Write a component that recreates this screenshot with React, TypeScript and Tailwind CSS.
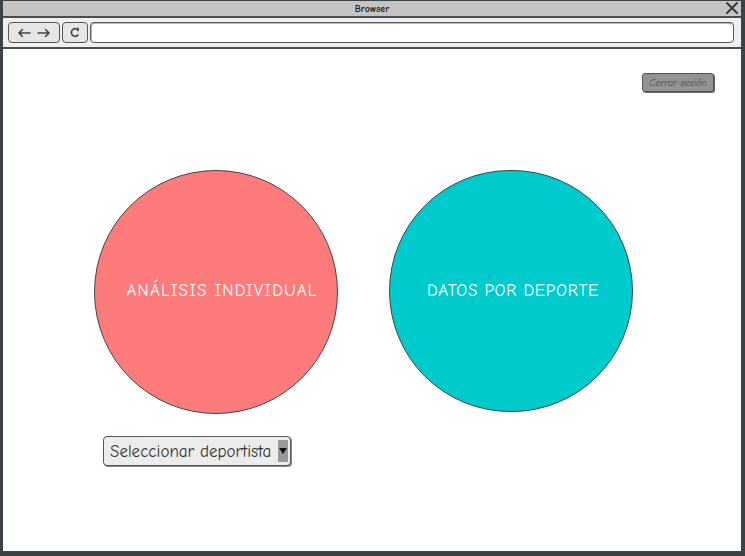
import React from "react";

export default function App() {
  const font = { fontFamily: '"Comic Neue","Noto Sans","DejaVu Sans",sans-serif' };
  return (
    <div className="w-[745px] h-[556px] bg-white flex flex-col border-l-[3px] border-r-[4px] border-b-[5px] border-t border-[#3d4247] overflow-hidden" style={font}>
      {/* Title bar */}
      <div className="h-[15px] bg-[#c4c4c4] relative flex items-center justify-center shrink-0">
        <span className="text-[10px] font-bold text-[#222] leading-none">Browser</span>
        <svg className="absolute right-[2px] top-[0px]" width="14" height="14" viewBox="0 0 14 14">
          <path d="M2 2 L12 12 M12 2 L2 12" stroke="#333" strokeWidth="1.8" strokeLinecap="round" />
        </svg>
      </div>
      <div className="h-[2px] bg-[#4a4f55] shrink-0" />
      {/* Toolbar */}
      <div className="h-[29px] bg-[#efefef] flex items-center gap-[2px] pl-[5px] pr-[7px] shrink-0">
        <div className="w-[52px] h-[21px] rounded-[4px] border-[1.5px] border-[#555] bg-[#e6e6e6] flex items-center justify-center gap-[6px]">
          <svg width="14" height="10" viewBox="0 0 14 10"><path d="M13 5 H2 M5.5 1.5 L2 5 L5.5 8.5" stroke="#444" strokeWidth="1.5" fill="none" strokeLinecap="round" /></svg>
          <svg width="14" height="10" viewBox="0 0 14 10"><path d="M1 5 H12 M8.5 1.5 L12 5 L8.5 8.5" stroke="#444" strokeWidth="1.5" fill="none" strokeLinecap="round" /></svg>
        </div>
        <div className="w-[26px] h-[21px] rounded-[4px] border-[1.5px] border-[#555] bg-[#e6e6e6] flex items-center justify-center">
          <svg width="10" height="11" viewBox="0 0 10 11"><path d="M8 3 A3.8 3.8 0 1 0 8 8" stroke="#444" strokeWidth="1.7" fill="none" strokeLinecap="round" /><path d="M8 1 V3.5" stroke="#444" strokeWidth="1.5" strokeLinecap="round" /></svg>
        </div>
        <div className="flex-1 h-[21px] rounded-[4px] border-[1.5px] border-[#555] bg-white shadow-[inset_1px_1px_0_#bbb]" />
      </div>
      <div className="h-[2px] bg-[#4a4f55] shrink-0" />
      {/* Content */}
      <div className="flex-1 flex flex-col">
        <div className="flex justify-end pt-[24px] pr-[27px]">
          <div className="w-[72px] h-[19px] rounded-[3px] border border-[#555] bg-[#939393] flex items-center justify-center shadow-[1px_1px_0_#666]">
            <span className="text-[10px] italic text-[#505050] leading-none">Cerrar sesión</span>
          </div>
        </div>
        <div className="flex pl-[91px] gap-[51px] mt-[78px]">
          <div className="w-[244px] h-[244px] rounded-full border-[1.5px] border-[#444] bg-[#fe7b7c] flex items-center justify-center pb-[4px] pl-[12px]">
            <span className="text-white text-[17px] tracking-[1.2px] leading-none">ANÁLISIS INDIVIDUAL</span>
          </div>
          <div className="w-[244px] h-[242px] rounded-full border-[1.5px] border-[#444] bg-[#00cbcc] flex items-center justify-center pb-[2px] pl-[4px]">
            <span className="text-white text-[17px] tracking-[0.7px] leading-none">DATOS POR DEPORTE</span>
          </div>
        </div>
        <div className="pl-[100px] mt-[22px]">
          <div className="w-[188px] h-[30px] rounded-[4px] border-[1.5px] border-[#555] bg-[#ececec] flex items-center pl-[6px] pr-[2px] shadow-[1px_1px_0_#888]">
            <span className="flex-1 text-[17px] text-[#333] leading-none">Seleccionar deportista</span>
            <div className="w-[10px] h-[22px] bg-[#9a9a9a] flex items-center justify-center">
              <svg width="8" height="6" viewBox="0 0 8 6"><path d="M0 0 H8 L4 6 Z" fill="#111" /></svg>
            </div>
          </div>
        </div>
      </div>
    </div>
  );
}
